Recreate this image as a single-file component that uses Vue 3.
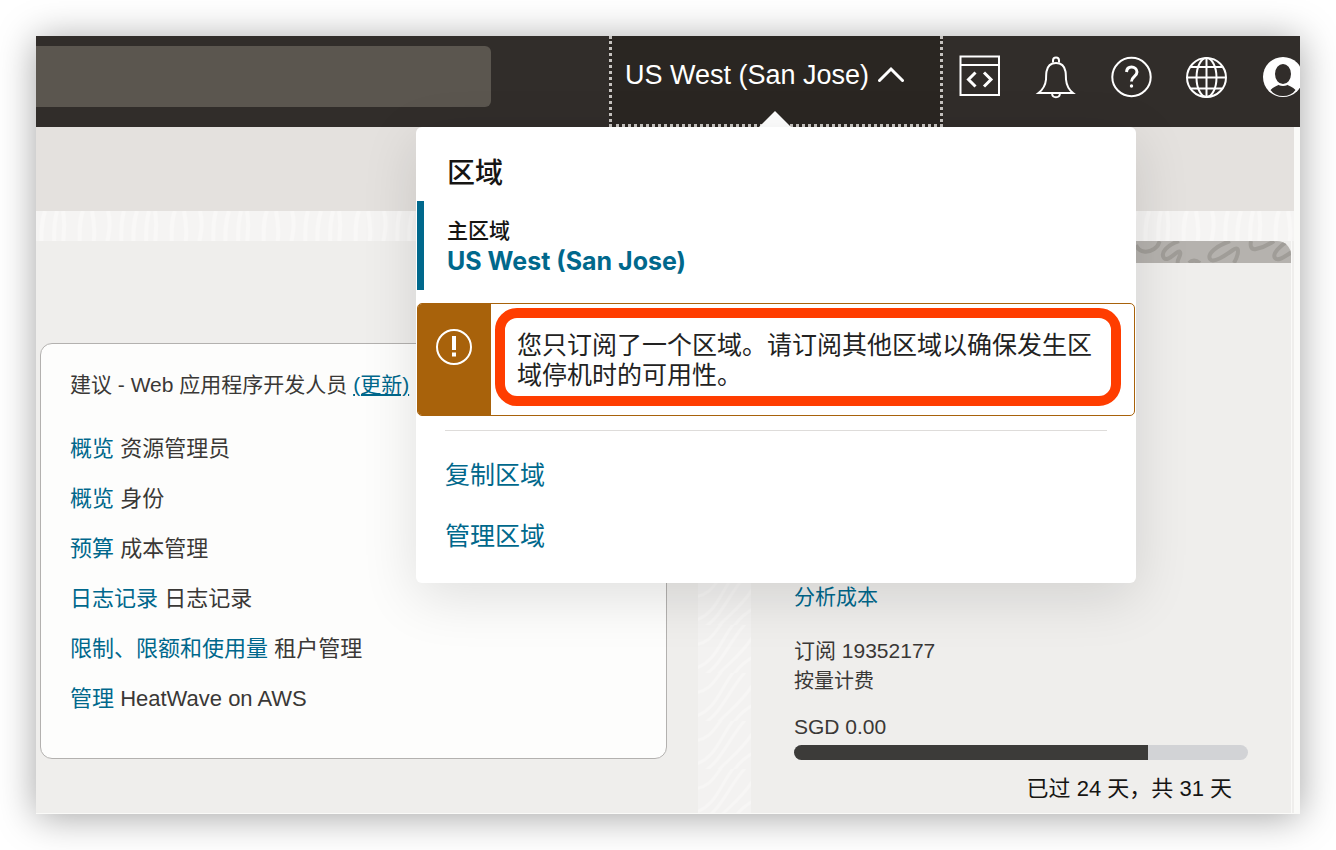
<template>
  <div class="page" lang="zh-CN">
    <div class="console">
      <header class="topbar">
        <input v-model="keyword" class="topbar__search" type="text" aria-label="搜索" />

        <div class="region">
          <button class="region__toggle" type="button" aria-expanded="true">
            <span>{{ region }}</span>
            <svg class="region__chevron" viewBox="0 0 26 20" aria-hidden="true">
              <path d="M1.5 14.5 13 3l11.500 11.500" />
            </svg>
          </button>
          <span class="region__caret"></span>

          <section class="popover">
            <h2 class="popover__title">区域</h2>
            <div class="popover__home">
              <div class="popover__label">主区域</div>
              <div class="popover__name">{{ region }}</div>
            </div>
            <div class="alert">
              <div class="alert__side">
                <svg viewBox="0 0 38 38" aria-hidden="true">
                  <circle cx="19" cy="19" r="17" />
                  <path d="M19 8v14M19 24.500v4" />
                </svg>
              </div>
              <p class="alert__text">您只订阅了一个区域。请订阅其他区域以确保发生区域停机时的可用性。</p>
            </div>
            <hr class="popover__line" />
            <nav class="popover__links">
              <a v-for="item in regionLinks" :key="item" href="#">{{ item }}</a>
            </nav>
          </section>
        </div>

        <nav class="tools">
          <button type="button" aria-label="开发人员工具">
            <svg viewBox="0 0 42 42">
              <path d="M1.500 1.500h38.500v38.500h-38.500z" />
              <path d="M1 10h39" />
              <path class="thick" d="M16.500 17.500 9.500 24.500l7 7M25 17.500 32 24.500l-7 7" />
            </svg>
          </button>
          <button type="button" aria-label="通知">
            <svg viewBox="0 0 42 42">
              <path d="M18 7.500V5.500a3 3 0 0 1 6 0v2" />
              <path d="M3.500 38h34.500c-5-4-6.500-8-7-13.500-.2-3.500 0-5.500-.5-8C29.500 11 26 8 21 8s-8.500 3-9.500 8.500c-.5 2.500-.3 4.500-.5 8C10.500 30 8.500 34 3.500 38z" />
              <path d="M17 38.500c.5 5 7.500 5 8 0" />
            </svg>
          </button>
          <button type="button" aria-label="帮助">
            <svg viewBox="0 0 42 42">
              <circle cx="20.500" cy="22" r="19.200" />
              <path class="thick" d="M15.500 17c.3-3.300 2.200-5 5-5s5.500 2 5.500 5c0 4.300-5.500 4.400-5.500 9.500" />
              <circle class="solid" cx="20.500" cy="31" r="1.700" />
            </svg>
          </button>
          <button type="button" aria-label="语言">
            <svg viewBox="0 0 42 42">
              <circle cx="19.500" cy="22.500" r="19.500" />
              <ellipse cx="19.500" cy="22.500" rx="10" ry="19.500" />
              <path d="M19.500 3v39M0 22.500h39M4 12h31M4 33.500h31" />
            </svg>
          </button>
          <button type="button" aria-label="个人资料">
            <svg viewBox="0 0 42 42">
              <circle class="solid" cx="20" cy="22" r="20" />
              <path class="dark" d="M7.500 35c3-3 6-4 8-5l1-2h7l1 2c2 1 5 2 8 5-3 4-7 6-12.500 6s-9.500-2-12.500-6z" />
              <ellipse class="head" cx="20" cy="19" rx="9" ry="11" />
            </svg>
          </button>
        </nav>
      </header>

      <div class="body">
        <div class="body__hero"></div>
        <svg class="texture texture--top" aria-hidden="true">
          <defs>
            <pattern id="bark" width="92" height="60" patternUnits="userSpaceOnUse">
              <path
                d="M4 60C8 40 2 20 9 0M18 60c2-20-3-38 3-60M27 60c-3-22 4-40 0-60M42 60c5-18-2-44 5-60M56 60c0-24 5-36 0-60M70 60c-5-20 8-38 2-60M84 60c4-16-2-40 4-60"
              />
            </pattern>
          </defs>
          <rect width="100%" height="100%" fill="url(#bark)" />
        </svg>

        <main class="columns">
          <div class="columns__left">
            <section class="card">
              <h3 class="card__title">建议 - Web 应用程序开发人员 <a href="#">(更新)</a></h3>
              <ul class="card__list">
                <li v-for="item in suggestions" :key="item.link + item.text">
                  <a href="#">{{ item.link }}</a> {{ item.text }}
                </li>
              </ul>
            </section>
          </div>

          <svg class="texture texture--side" aria-hidden="true">
            <defs>
              <pattern id="grain" width="54" height="48" patternUnits="userSpaceOnUse">
                <path
                  d="M-4 20C14 18 18 4 26-4M-4 44C20 36 22 14 38-4M4 52C24 40 30 18 48-2M18 52c14-16 24-20 38-42M34 52c8-12 14-16 24-22"
                />
              </pattern>
            </defs>
            <rect width="100%" height="100%" fill="url(#grain)" />
          </svg>

          <aside class="cost">
            <div class="cost__banner">
              <svg viewBox="0 0 155 22" aria-hidden="true">
                <path d="M0 4c3 8 12 8 18 4s4-6 6-8" />
                <path d="M43 0C31 4 24 12 28 17s14-9 16-6-4 8-2 12" />
                <path d="M53 22c3-3 7-3 11 0" />
                <path d="M94 0C80 5 71 13 74 18s16-4 23-9 6 4 1 13" />
                <path d="M115 0c-1 5 0 9 5 8s12-4 18-8" />
                <path d="M153 0c-9 4-17 13-14 17s10-2 17-6" />
              </svg>
            </div>
            <div class="cost__body">
              <a class="cost__link" href="#">分析成本</a>
              <div class="cost__sub">订阅 19352177</div>
              <div class="cost__type">按量计费</div>
              <div class="cost__amount">SGD 0.00</div>
              <div class="cost__bar">
                <div class="cost__fill" :style="{ width: elapsed + '%' }"></div>
              </div>
              <div class="cost__days">已过 24 天，共 31 天</div>
            </div>
          </aside>
        </main>
      </div>
    </div>
  </div>
</template>

<script setup>
import { ref } from 'vue'

const keyword = ref('')
const region = 'US West (San Jose)'
const regionLinks = ['复制区域', '管理区域']

const suggestions = [
  { link: '概览', text: '资源管理员' },
  { link: '概览', text: '身份' },
  { link: '预算', text: '成本管理' },
  { link: '日志记录', text: '日志记录' },
  { link: '限制、限额和使用量', text: '租户管理' },
  { link: '管理', text: 'HeatWave on AWS' }
]

// 计费周期进度
const elapsed = 78
</script>

<style>
body {
  margin: 0;
  background: #fff;
}
</style>

<style scoped>
* {
  box-sizing: border-box;
}

.page {
  display: flex;
  min-height: 100vh;
  padding: 36px;
  font-family: 'Liberation Sans', 'Noto Sans CJK SC', sans-serif;
  font-size: 21px;
  line-height: 30px;
  color: #3a3836;
}

a {
  color: #00688c;
  text-decoration: none;
}

button {
  padding: 0;
  border: 0;
  background: none;
  color: #fff;
  font-family: inherit;
}

.console {
  flex: 1;
  display: flex;
  flex-direction: column;
  min-width: 0;
  background: #efeeec;
  box-shadow: 0 3px 36px rgba(0, 0, 0, 0.36);
}

/* 顶部导航 */
.topbar {
  display: flex;
  align-items: flex-start;
  height: 91px;
  background: #312d2a;
}

.topbar__search {
  flex: 0 1 455px;
  min-width: 0;
  height: 61px;
  margin-top: 10px;
  padding: 0 16px;
  border: 0;
  border-radius: 0 6px 6px 0;
  background: #5b564f;
  color: #fff;
  font-size: 24px;
}

.region {
  position: relative;
  flex: none;
  width: 334px;
  height: 91px;
  margin-left: auto;
}

.region__toggle {
  display: flex;
  align-items: center;
  gap: 9px;
  width: 100%;
  height: 100%;
  padding: 0 0 9px 13px;
  border: 3px dotted #c6c3c0;
  border-top: 0;
  background: #2a2622;
  font-size: 27px;
  white-space: nowrap;
}

.region__chevron {
  width: 26px;
  height: 20px;
  fill: none;
  stroke: #fff;
  stroke-width: 3;
  stroke-linecap: round;
}

.region__caret {
  position: absolute;
  bottom: 0;
  left: 50%;
  margin-left: -17px;
  border: 16px solid transparent;
  border-top: 0;
  border-bottom-color: #fff;
}

.tools {
  flex: 0 0 341px;
  display: flex;
  gap: 34px;
  margin: 17px 0 0 16px;
  overflow: hidden;
}

.tools button {
  flex: none;
  width: 42px;
  height: 46px;
}

.tools svg {
  display: block;
  width: 42px;
  height: 46px;
  overflow: visible;
  fill: none;
  stroke: #fff;
  stroke-width: 2;
}

.tools .thick {
  stroke-width: 3;
}

.tools .solid {
  fill: #fff;
  stroke: none;
}

.tools .dark {
  fill: #312d2a;
  stroke: none;
}

.tools .head {
  fill: #312d2a;
}

/* 区域弹出层 */
.popover {
  position: absolute;
  top: 100%;
  left: 50%;
  z-index: 10;
  width: 720px;
  padding: 29px 1px 32px;
  border-radius: 6px;
  background: #fff;
  box-shadow: 0 14px 56px rgba(0, 0, 0, 0.12);
  transform: translateX(-50%);
}

.popover__title {
  margin: 0 0 9px;
  padding-left: 30px;
  color: #161513;
  font-size: 28px;
  line-height: 36px;
  font-weight: 500;
}

.popover__home {
  padding: 15px 0 14px 23px;
  border-left: 7px solid #00688c;
  color: #161513;
}

.popover__label {
  font-weight: 500;
}

.popover__name {
  color: #00688c;
  font-family: Inter, sans-serif;
  font-size: 25px;
  font-weight: 700;
}

.alert {
  display: flex;
  margin-top: 13px;
  border: 1px solid #a8620b;
  border-radius: 5px;
  overflow: hidden;
}

.alert__side {
  flex: none;
  width: 73px;
  padding: 24px 0 0 17px;
  background: #a8620b;
}

.alert__side svg {
  display: block;
  width: 38px;
  height: 38px;
  fill: none;
  stroke: #fff;
  stroke-width: 2;
}

.alert__side path {
  stroke-width: 4;
}

.alert__text {
  flex: 1;
  margin: 4px 13px 9px 4px;
  padding: 12px 12px 6px;
  border: 10px solid #ff3d00;
  border-radius: 22px;
  color: #222;
  font-size: 25px;
}

.popover__line {
  margin: 14px 28px 0;
  border: 0;
  border-top: 1px solid #dedcda;
}

.popover__links {
  display: flex;
  flex-direction: column;
  align-items: flex-start;
  gap: 31px;
  padding: 29px 28px 0;
  font-size: 25px;
}

/* 页面主体 */
.body {
  flex: 1;
  display: flex;
  flex-direction: column;
  padding-right: 3px;
  border-right: 6px solid #fafaf8;
  border-bottom: 1px solid #fafaf8;
}

.body__hero {
  height: 84px;
  margin-right: -3px;
  background: #e4e1de;
}

.texture {
  display: block;
  background: #f5f4f3;
}

.texture path {
  fill: none;
  stroke: #f9f8f7;
  stroke-width: 4;
}

.texture--top {
  width: calc(100% + 3px);
  height: 30px;
}

.texture--side {
  width: 100%;
  height: 100%;
  background: #f3f2f1;
}

.texture--side path {
  stroke: #f7f6f5;
  stroke-width: 3;
}

.columns {
  flex: 1;
  display: grid;
  grid-template-columns: 1fr 53px 540px;
  box-shadow: 1px 0 #fafaf8;
}

.columns__left {
  padding: 102px 31px 54px 4px;
}

.card {
  height: 100%;
  padding: 26px 29px 40px;
  border: 1px solid #b3b1af;
  border-radius: 12px;
  background: #fdfdfc;
}

.card__title {
  margin: 0 0 34px;
  font-size: inherit;
  font-weight: 400;
  white-space: nowrap;
}

.card__title a {
  text-decoration: underline;
}

.card__list {
  display: flex;
  flex-direction: column;
  gap: 20px;
  margin: 0;
  padding: 0;
  font-size: 22px;
  list-style: none;
}

.cost {
  display: flex;
  flex-direction: column;
  justify-content: space-between;
}

.cost__banner {
  display: flex;
  justify-content: flex-end;
  height: 22px;
  border-radius: 14px 14px 0 0;
  background: #b5b2ae;
  overflow: hidden;
}

.cost__banner svg {
  width: 155px;
  height: 22px;
  fill: none;
  stroke: #a09d98;
  stroke-width: 4;
}

.cost__body {
  display: flex;
  flex-direction: column;
  padding: 0 43px 9px;
}

.cost__sub {
  margin-top: 24px;
}

.cost__type {
  font-size: 20px;
}

.cost__amount {
  margin-top: 16px;
}

.cost__bar {
  height: 15px;
  margin-top: 3px;
  border-radius: 8px;
  background: #d2d3d6;
  overflow: hidden;
}

.cost__fill {
  height: 100%;
  background: #3c3b39;
}

.cost__days {
  margin-top: 14px;
  padding-right: 16px;
  color: #161513;
  font-size: 22px;
  text-align: right;
}
</style>
